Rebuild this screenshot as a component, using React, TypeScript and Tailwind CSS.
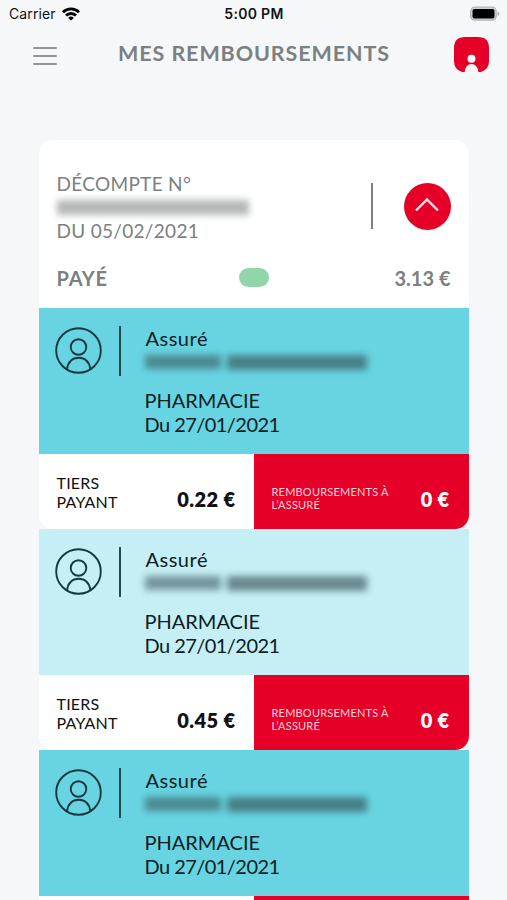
import { clsx } from 'clsx';

interface Care {
  id: number;
  type: string;
  date: string;
  thirdParty?: string;
  refund?: string;
}

const cares: Care[] = [
  { id: 1, type: 'PHARMACIE', date: '27/01/2021', thirdParty: '0.22 €', refund: '0 €' },
  { id: 2, type: 'PHARMACIE', date: '27/01/2021', thirdParty: '0.45 €', refund: '0 €' },
  { id: 3, type: 'PHARMACIE', date: '27/01/2021' },
];

function StatusBar() {
  return (
    <div className="grid h-7 grid-cols-3 items-center pl-[9px] pr-[7px] font-['Inter',sans-serif] text-sm text-[#111315]">
      <div className="flex items-center gap-[6px]">
        <span className="tracking-[0.1px]">Carrier</span>
        <svg className="h-[14px] w-[18px]" viewBox="0 0 18 14" fill="none" stroke="#000" strokeWidth="2.8">
          <path d="M1 5.2a11.4 11.4 0 0 1 16 0" />
          <path d="M4 8.6a7 7 0 0 1 10 0" />
          <path d="M9 13.5 6.2 10.9a4 4 0 0 1 5.6 0Z" fill="#000" stroke="none" />
        </svg>
      </div>
      <span className="-ml-[1px] text-center font-semibold tracking-[0.3px]">5:00 PM</span>
      <svg className="h-4 w-8 justify-self-end" viewBox="0 0 32 16">
        <rect x="2.7" y="1.2" width="25.5" height="13" rx="4" fill="#d2d4d4" stroke="#b4b6b6" strokeWidth="1.2" />
        <rect x="4.500" y="3" width="22" height="9.500" rx="2" fill="#000" />
        <path d="M29.500 5.500v4.600q2-.7 2-2.300t-2-2.300Z" fill="#b4b6b6" />
      </svg>
    </div>
  );
}

function Header() {
  return (
    <header className="flex h-[56px] items-start justify-between pl-[33px] pr-[18px] pt-[9px]">
      <div className="mt-[10px] flex w-6 flex-col gap-[6px]">
        <span className="h-[2px] rounded bg-[#919595]" />
        <span className="h-[2px] rounded bg-[#919595]" />
        <span className="h-[2px] rounded bg-[#919595]" />
      </div>
      <h1 className="ml-[-3px] mt-[2px] whitespace-nowrap text-[21.5px] font-bold leading-[28px] tracking-[0.9px] text-[#7b8080]">
        MES REMBOURSEMENTS
      </h1>
      <svg className="h-[35px] w-[35px]" viewBox="0 0 35 35">
        <path
          d="M11 0h13q11 0 11 11v13q0 8.500-8 11h-2.700a6.800 8 0 0 0-13.600 0H8Q0 32.500 0 24V11Q0 0 11 0Z"
          fill="#e60028"
        />
        <circle cx="17.500" cy="21.700" r="4" fill="#fff" />
      </svg>
    </header>
  );
}

function UserIcon() {
  return (
    <svg className="h-[47px] w-[47px]" viewBox="0 0 47 47" fill="none" stroke="#163940" strokeWidth="1.900">
      <circle cx="23.500" cy="23.500" r="22.300" />
      <circle cx="23.500" cy="20" r="7.800" />
      <path d="M12 42.500C12.800 34.700 17.500 30.800 23.700 30.800s10.900 3.900 11.700 11.700" />
    </svg>
  );
}

/* Masked insured name */
function HiddenName() {
  return (
    <div className="flex h-6 items-center gap-[6px] opacity-75 blur-[3.5px]">
      <span className="h-[14px] w-[76px] bg-[#344f53]/75" />
      <span className="h-[15px] w-[140px] bg-[#344f53]/85" />
    </div>
  );
}

function CareItem({ care, light }: { care: Care; light: boolean }) {
  return (
    <section className="h-[221px]">
      <div className={clsx('flex h-[146px] pl-[16px] pt-[18px] text-[#0c2024]', light ? 'bg-[#c5eff4]' : 'bg-[#68d4e1]')}>
        <div className="pt-[1px]">
          <UserIcon />
        </div>
        <div className="ml-[17px] h-[50px] w-[2px] bg-[#244a50]" />
        <div className="ml-6 text-[20px] leading-6">
          <p className="pl-[1px] tracking-[0.5px]">Assuré</p>
          <HiddenName />
          <p className="mt-[14px]">{care.type}</p>
          <p className="tracking-[-0.55px]">Du {care.date}</p>
        </div>
      </div>
      <div className="flex h-[75px]">
        <div className="flex w-[215px] justify-between rounded-bl-[14px] bg-white pl-[18px] pr-[18px] text-[#111]">
          {care.thirdParty && (
            <>
              <p className="pt-[19px] text-[16px] leading-[19px] tracking-[0.2px]">
                TIERS
                <br />
                PAYANT
              </p>
              <p className="pt-[33px] text-[20px] font-extrabold leading-6 tracking-[0.4px]">{care.thirdParty}</p>
            </>
          )}
        </div>
        <div className="flex w-[215px] justify-between rounded-br-[14px] bg-[#e60028] pl-[18px] pr-[19px] text-white">
          {care.refund && (
            <>
              <p className="pt-[31px] text-[11px] leading-[13px] tracking-[0.2px] text-[#ffd5dc]">
                REMBOURSEMENTS À
                <br />
                L’ASSURÉ
              </p>
              <p className="pt-[33px] text-[20px] font-extrabold leading-6 tracking-[0.3px]">{care.refund}</p>
            </>
          )}
        </div>
      </div>
    </section>
  );
}

export default function App() {
  return (
    <div className="h-[900px] overflow-hidden bg-[#f5f7f9] font-['Lato',sans-serif]">
      <StatusBar />
      <Header />
      <main className="mx-auto mt-14 w-[430px]">
        <div className="h-[168px] rounded-t-[14px] bg-white px-[18px] text-[#7b8080]">
          <div className="flex pt-8">
            <div className="flex-1 text-[19px] leading-6 tracking-[0.3px]">
              <p>DÉCOMPTE N°</p>
              <div className="flex h-[23px] items-center blur-[3.5px]">
                <span className="h-[15px] w-[192px] bg-[#b4b7b7]" />
              </div>
              <p>DU 05/02/2021</p>
            </div>
            <div className="mt-[11px] h-[46px] w-[2px] bg-[#7b8080]" />
            <button className="ml-[31px] mt-[11px] flex h-[47px] w-[47px] items-center justify-center rounded-full bg-[#e60028]">
              <svg className="mb-[3px] h-[14px] w-6" viewBox="0 0 24 14" fill="none" stroke="#ffe5e9" strokeWidth="2.400">
                <path d="m1 12.500 11-11 11 11" />
              </svg>
            </button>
          </div>
          <div className="mt-[21px] grid grid-cols-3 items-center text-[20px] font-bold leading-7">
            <span className="tracking-[0.8px]">PAYÉ</span>
            <span className="ml-[2px] h-[19px] w-[30px] -translate-y-px justify-self-center rounded-full bg-[#91d5aa]" />
            <span className="text-right">3.13 €</span>
          </div>
        </div>
        {cares.map((care, index) => (
          <CareItem key={care.id} care={care} light={index % 2 === 1} />
        ))}
      </main>
    </div>
  );
}
